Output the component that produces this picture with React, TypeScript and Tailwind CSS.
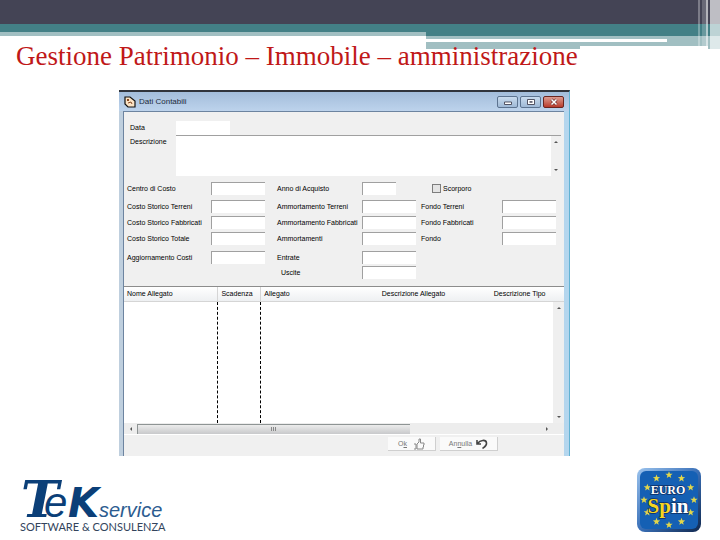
import { useState } from "react";
import clsx from "clsx";

const columns = [
    { name: 'Nome Allegato', width: 'w-[21.9%]', line: false },
    { name: 'Scadenza', width: 'w-[10%]', line: true },
    { name: 'Allegato', width: 'w-[27.5%]', line: true },
    { name: 'Descrizione Allegato', width: 'w-[26.1%]', line: false },
    { name: 'Descrizione Tipo', width: 'w-[14.5%]', line: false },
];

const STARS = Array.from({ length: 12 }, (_, i) => (i * Math.PI) / 6);

const starPoints = (cx: number, cy: number, r: number) =>
    Array.from({ length: 10 }, (_, i) => {
        const radius = i % 2 ? r * 0.42 : r;
        const a = (i * Math.PI) / 5 - Math.PI / 2;
        return `${(cx + radius * Math.cos(a)).toFixed(2)},${(cy + radius * Math.sin(a)).toFixed(2)}`;
    }).join(' ');

const Banner = () => (
    <div className="relative h-[49px] shrink-0">
        <div className="h-6 bg-[#444455]" />
        <div className="grid grid-cols-[426fr_294fr]">
            <div>
                <div className="h-2 bg-[#438086]" />
                <div className="h-1 bg-[#a1bfc2]" />
            </div>
            <div>
                <div className="h-3 bg-[#438086]" />
                <div className="h-[10px] bg-[#a1bfc2] pt-[3px]">
                    <div className="h-[3px] w-[82%] bg-white" />
                </div>
                <div className="flex h-[3px] justify-between">
                    <div className="w-[52.4%] bg-[#a1bfc2]" />
                    <div className="w-3 bg-[#a1bfc2]" />
                </div>
            </div>
        </div>
        <div className="absolute right-0 top-0 flex h-full">
            <div className="mr-[2px] w-[2px] bg-white/30" />
            <div className="w-1 bg-white/20" />
            <div className="mr-[2px] w-[2px] bg-white/60" />
            <div className="w-[10px] bg-white/65" />
        </div>
    </div>
);

const Field = ({ id, label, indent = '', small = false }: { id: string, label: string, indent?: string, small?: boolean }) => (
    <>
        <label htmlFor={id} className={clsx("min-w-0 whitespace-nowrap", indent)}>{label}</label>
        <input
            id={id}
            className={clsx(
                "h-[13px] min-w-0 border-l border-t border-[#a0a0a0] bg-white px-1 outline-none",
                small ? "w-[63%]" : "w-full"
            )}
        />
    </>
);

const Arrow = ({ d }: { d: string }) => (
    <svg viewBox="0 0 6 6" className="size-[6px] shrink-0" fill="#555"><path d={d} /></svg>
);

const UP = "M1 4L3 2L5 4Z";
const DOWN = "M1 2L3 4L5 2Z";

const TitleBar = () => (
    <div className="flex h-[19px] items-center bg-gradient-to-b from-[#a3bddb] to-[#bdd3ec] pl-[5px] pr-[5px]">
        <svg viewBox="0 0 12 12" className="size-3">
            <path d="M1 1H6L11 5V11H4L1 8Z" fill="#fbe3c4" stroke="#111" strokeWidth="1.2" />
            <path d="M3 3L5 5M5 3L3 5M4 7L7 6L8 8" fill="none" stroke="#8a4a24" />
        </svg>
        <h2 className="ml-[3px] flex-1 text-[8px] leading-[10px] text-[#1d2b3c]">Dati Contabili</h2>
        <div className="flex gap-[2px]">
            <button aria-label="Riduci" className="flex h-3 w-[21px] items-center justify-center rounded-xs border border-[#5c7390] bg-gradient-to-b from-[#c9dbee] to-[#9fb9d6]">
                <svg viewBox="0 0 8 8" className="size-2"><path d="M.5 4H7.500V6.500H.5Z" fill="#fff" stroke="#445" strokeWidth=".9" /></svg>
            </button>
            <button aria-label="Ingrandisci" className="flex h-3 w-[21px] items-center justify-center rounded-xs border border-[#5c7390] bg-gradient-to-b from-[#c9dbee] to-[#9fb9d6]">
                <svg viewBox="0 0 8 8" className="size-2"><path d="M.5 1.5H7.500V6.500H.5Z" fill="#fff" stroke="#445" strokeWidth=".9" /><path d="M2.500 3.200H5.500V4.700H2.500Z" fill="#445" /></svg>
            </button>
            <button aria-label="Chiudi" className="flex h-3 w-[21px] items-center justify-center rounded-xs border border-[#6b2520] bg-gradient-to-b from-[#dc9a90] to-[#b83a2c]">
                <svg viewBox="0 0 8 8" className="size-2"><path d="M1.5 1.5L6.5 6.5M6.5 1.5L1.5 6.5" stroke="#622" strokeWidth="2.8" /><path d="M1.5 1.5L6.5 6.5M6.5 1.5L1.5 6.5" stroke="#fff" strokeWidth="1.6" /></svg>
            </button>
        </div>
    </div>
);

const AccountForm = () => {
    const [scorporo, setScorporo] = useState(false);

    return (
        <form className="pl-[3px] pt-[9px]">
            <div className="grid grid-cols-[46fr_385fr_3fr] items-start pl-[3px]">
                <label htmlFor="data" className="min-w-0">Data</label>
                <input id="data" className="h-[14px] w-[14%] min-w-0 bg-white px-1 outline-none" />
                <span />
                <label htmlFor="descrizione" className="min-w-0">Descrizione</label>
                <div className="flex h-[41px] min-w-0 border-t border-[#a0a0a0] bg-white">
                    <textarea id="descrizione" className="min-w-0 flex-1 resize-none px-1 outline-none" />
                    <div className="flex w-[10px] flex-col items-center justify-between bg-[#f0f0f0] py-[3px]">
                        <Arrow d={UP} />
                        <Arrow d={DOWN} />
                    </div>
                </div>
            </div>
            <div className="mt-[6px] grid grid-cols-[84fr_54fr_97fr_54fr_86fr_54fr_8fr] items-center gap-y-[3px]">
                <Field id="centro" label="Centro di Costo" />
                <Field id="anno" label="Anno di Acquisto" indent="pl-3" small />
                <div className="col-span-3 flex items-center gap-[2px] pl-4">
                    <input
                        id="scorporo"
                        type="checkbox"
                        checked={scorporo}
                        onChange={() => setScorporo(!scorporo)}
                        className="size-[9px] appearance-none border border-[#7d7d7d] bg-[#e4e4e4] checked:bg-[#4a6a8a]"
                    />
                    <label htmlFor="scorporo">Scorporo</label>
                </div>
            </div>
            <div className="mt-[5px] grid grid-cols-[84fr_54fr_97fr_54fr_86fr_54fr_8fr] items-center gap-y-[3px]">
                <Field id="st-terreni" label="Costo Storico Terreni" />
                <Field id="am-terreni" label="Ammortamento Terreni" indent="pl-3" />
                <Field id="fo-terreni" label="Fondo Terreni" indent="pl-[5px]" />
                <span />
                <Field id="st-fabbricati" label="Costo Storico Fabbricati" />
                <Field id="am-fabbricati" label="Ammortamento Fabbricati" indent="pl-3" />
                <Field id="fo-fabbricati" label="Fondo Fabbricati" indent="pl-[5px]" />
                <span />
                <Field id="st-totale" label="Costo Storico Totale" />
                <Field id="ammortamenti" label="Ammortamenti" indent="pl-3" />
                <Field id="fondo" label="Fondo" indent="pl-[5px]" />
            </div>
            <div className="mt-[6px] grid grid-cols-[84fr_54fr_97fr_54fr_86fr_54fr_8fr] items-center gap-y-[2px]">
                <Field id="aggiornamento" label="Aggiornamento Costi" />
                <Field id="entrate" label="Entrate" indent="pl-3" />
                <span className="col-span-3" />
                <span className="col-span-2" />
                <Field id="uscite" label="Uscite" indent="pl-4" />
            </div>
        </form>
    );
};

const Attachments = () => (
    <div className="mt-[7px]">
        <div className="flex border-t border-[#8c8c8c] bg-white">
            <table className="min-w-0 flex-1 table-fixed border-collapse">
                <thead>
                    <tr className="h-[14px] bg-gradient-to-b from-white to-[#eef0f2]">
                        {columns.map((col) => (
                            <th
                                key={col.name}
                                className={clsx("whitespace-nowrap border-b border-[#d5d5d5] p-0 pl-[3px] text-left font-normal", col.width, col.line && "border-l")}
                            >
                                {col.name}
                            </th>
                        ))}
                    </tr>
                </thead>
                <tbody>
                    <tr className="h-[122px]">
                        {columns.map((col) => (
                            <td key={col.name} className={clsx("p-0", col.line && "border-l border-dashed border-black")} />
                        ))}
                    </tr>
                </tbody>
            </table>
            <div className="flex w-[11px] flex-col">
                <div className="h-[15px] border-b border-[#d5d5d5] bg-gradient-to-b from-white to-[#eef0f2]" />
                <div className="flex flex-1 flex-col items-center justify-between bg-[#efefef] py-[3px]">
                    <Arrow d={UP} />
                    <Arrow d={DOWN} />
                </div>
            </div>
        </div>
        <div className="flex h-[11px] items-center bg-[#ededed] pr-[14px]">
            <div className="flex w-[13px] justify-center"><Arrow d="M4 1L2 3L4 5Z" /></div>
            <div className="flex h-[10px] w-[64%] items-center justify-center gap-[1px] border-l border-t border-[#8e9494] bg-gradient-to-b from-[#ececec] to-[#c8c9cb]">
                <span className="h-1 w-px bg-[#888]" />
                <span className="h-1 w-px bg-[#888]" />
                <span className="h-1 w-px bg-[#888]" />
            </div>
            <span className="flex-1" />
            <Arrow d="M2 1L4 3L2 5Z" />
        </div>
    </div>
);

const ContabiliWindow = () => (
    <section className="border-r border-t-2 border-r-[#62b2d2] border-t-[#30343c] bg-gradient-to-r from-[#bfcfde] to-[#b4d6ee] text-[7px] leading-[13px] text-black [font-family:'Liberation_Sans',sans-serif]">
        <TitleBar />
        <div className="ml-1 mr-[5px] border-l border-t border-[#6d84a0] bg-[#f0f0f0]">
            <AccountForm />
            <Attachments />
            <div className="flex justify-end gap-1 border-t border-white pb-[5px] pr-[66px] pt-[2px] text-[#777]">
                <button className="flex h-[14px] w-12 items-center justify-center gap-[6px] border-b border-r border-[#cfcfcf] bg-[#fafafa]">
                    <span>O<u>k</u></span>
                    <svg viewBox="0 0 12 12" className="size-3" fill="none" stroke="#888"><path d="M1 6H3V11H1M4 6L6 4V1H7.5V5H11V7H10.500V9H10V11H4Z" /></svg>
                </button>
                <button className="flex h-[14px] w-[58px] items-center justify-center gap-1 border-b border-r border-[#cfcfcf] bg-[#fafafa]">
                    <span>An<u>n</u>ulla</span>
                    <svg viewBox="0 0 12 12" className="size-3" fill="none" stroke="#444" strokeWidth="1.6"><path d="M1 2V6H5M1.500 5.500C4 2 10 1 10.500 5C10.800 7.500 8.500 9 6.500 10.500" /></svg>
                </button>
            </div>
        </div>
    </section>
);

const TekLogo = () => (
    <svg viewBox="0 0 148 68" className="h-[68px] w-[148px] overflow-visible" fill="#0b3f78">
        <text x="3" y="52" fontSize="51" fontWeight="700" fontStyle="italic" fontFamily="DejaVu Serif, serif">T</text>
        <text x="26" y="52" fontSize="42" fontStyle="italic" fontFamily="Liberation Sans, sans-serif">e</text>
        <text x="50" y="52" fontSize="40" fontWeight="700" fontStyle="italic" fontFamily="DejaVu Sans, sans-serif">K</text>
        <text x="81" y="52" fontSize="20" fontStyle="italic" fill="#2c5c90" fontFamily="Liberation Sans, sans-serif">service</text>
        <text x="2" y="66" fontSize="11" fill="#33445c" fontFamily="Lato, sans-serif">SOFTWARE &amp; CONSULENZA</text>
    </svg>
);

const EuroSpinLogo = () => (
    <svg viewBox="0 0 66 66" className="size-[66px]">
        <defs>
            <linearGradient id="edge" x1="0" y1="0" x2="1" y2="1">
                <stop offset="0" stopColor="#9cc4ee" />
                <stop offset=".5" stopColor="#3a70b8" />
                <stop offset="1" stopColor="#10284f" />
            </linearGradient>
        </defs>
        <rect x="1" y="1" width="64" height="64" rx="8" fill="url(#edge)" />
        <rect x="4" y="4" width="58" height="58" rx="6" fill="#1560b4" />
        {STARS.map((a) => (
            <polygon key={a} points={starPoints(33 + 25 * Math.sin(a), 33 - 25 * Math.cos(a), 3.8)} fill="#e3d64a" />
        ))}
        <g fontFamily="Liberation Serif, serif" fontWeight="700" textAnchor="middle" stroke="#0c2f66" strokeWidth="1.5" paintOrder="stroke">
            <text x="32" y="27" fontSize="12" fill="#fff">EURO</text>
            <text x="32" y="46" fontSize="21" fill="#fff"><tspan fill="#f5d51f">Sp</tspan>in</text>
        </g>
    </svg>
);

export default function App() {
    return (
        <div className="flex min-h-screen flex-col bg-white">
            <Banner />
            <h1 className="relative -mt-[7px] pl-4 text-[27px] leading-7 text-[#c01818] [font-family:'Liberation_Serif',serif]">
                Gestione Patrimonio – Immobile – amministrazione
            </h1>
            <main className="mt-5 grid grid-cols-[119fr_451fr_150fr]">
                <div className="col-start-2 min-w-0">
                    <ContabiliWindow />
                </div>
            </main>
            <footer className="mt-auto flex items-end justify-between pb-[7px] pl-[18px] pr-[18px]">
                <TekLogo />
                <EuroSpinLogo />
            </footer>
        </div>
    )
}
